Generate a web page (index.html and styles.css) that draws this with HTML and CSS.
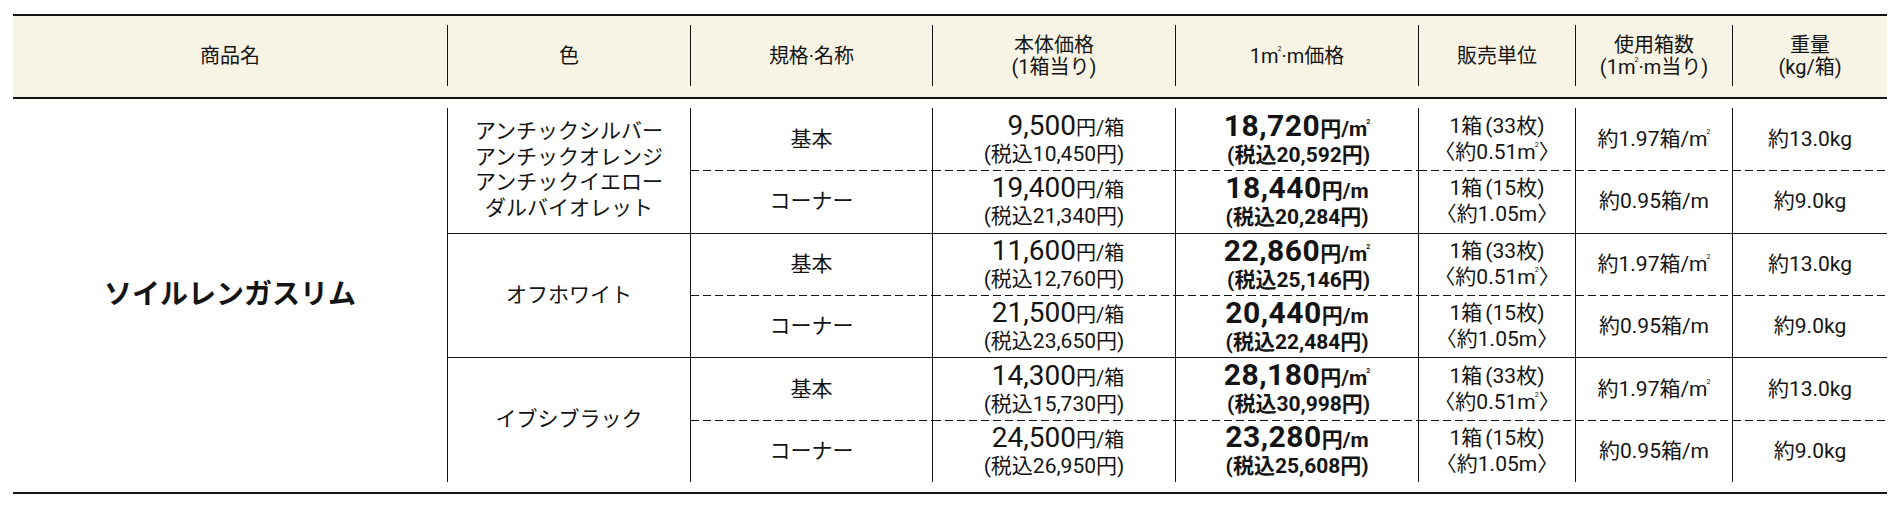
FILE: index.html
```html
<!DOCTYPE html>
<html lang="ja">
<head>
<meta charset="utf-8">
<title>ソイルレンガスリム 価格表</title>
<link rel="stylesheet" href="styles.css">
</head>
<body>
<div class="tbl">
  <div class="head">
    <div class="hc"><span>商品名</span></div>
    <div class="hc sep"><span>色</span></div>
    <div class="hc sep"><span>規格·名称</span></div>
    <div class="hc sep"><span>本体価格<br>(1箱当り)</span></div>
    <div class="hc sep"><span>1m<span class="sq">2</span>·m価格</span></div>
    <div class="hc sep"><span>販売単位</span></div>
    <div class="hc sep"><span>使用箱数<br>(1m<span class="sq">2</span>·m当り)</span></div>
    <div class="hc sep"><span>重量<br>(kg/箱)</span></div>
  </div>
  <div class="body">
    <div class="c prod"><span>ソイルレンガスリム</span></div>

    <div class="c sep color g1"><span>アンチックシルバー<br>アンチックオレンジ<br>アンチックイエロー<br>ダルバイオレット</span></div>
    <div class="c sep"><span>基本</span></div>
    <div class="c sep"><span class="pr"><span class="num">9,500</span><span class="u">円/箱</span><br><span class="tax">(税込10,450円)</span></span></div>
    <div class="c sep"><span class="pr b"><span class="num">18,720</span><span class="u">円/m<span class="sq">2</span></span><br><span class="tax">(税込20,592円)</span></span></div>
    <div class="c sep"><span class="two">1箱<span class="pl">(33枚)</span><br>〈約0.51m<span class="sq">2</span>〉</span></div>
    <div class="c sep"><span>約1.97箱/m<span class="sq">2</span></span></div>
    <div class="c sep"><span>約13.0kg</span></div>

    <div class="c sep dash"><span>コーナー</span></div>
    <div class="c sep dash"><span class="pr"><span class="num">19,400</span><span class="u">円/箱</span><br><span class="tax">(税込21,340円)</span></span></div>
    <div class="c sep dash"><span class="pr b"><span class="num">18,440</span><span class="u">円/m</span><br><span class="tax">(税込20,284円)</span></span></div>
    <div class="c sep dash"><span class="two">1箱<span class="pl">(15枚)</span><br>〈約1.05m〉</span></div>
    <div class="c sep dash"><span>約0.95箱/m</span></div>
    <div class="c sep dash"><span>約9.0kg</span></div>

    <div class="c sep color g2 top"><span>オフホワイト</span></div>
    <div class="c sep top"><span>基本</span></div>
    <div class="c sep top"><span class="pr"><span class="num">11,600</span><span class="u">円/箱</span><br><span class="tax">(税込12,760円)</span></span></div>
    <div class="c sep top"><span class="pr b"><span class="num">22,860</span><span class="u">円/m<span class="sq">2</span></span><br><span class="tax">(税込25,146円)</span></span></div>
    <div class="c sep top"><span class="two">1箱<span class="pl">(33枚)</span><br>〈約0.51m<span class="sq">2</span>〉</span></div>
    <div class="c sep top"><span>約1.97箱/m<span class="sq">2</span></span></div>
    <div class="c sep top"><span>約13.0kg</span></div>

    <div class="c sep dash"><span>コーナー</span></div>
    <div class="c sep dash"><span class="pr"><span class="num">21,500</span><span class="u">円/箱</span><br><span class="tax">(税込23,650円)</span></span></div>
    <div class="c sep dash"><span class="pr b"><span class="num">20,440</span><span class="u">円/m</span><br><span class="tax">(税込22,484円)</span></span></div>
    <div class="c sep dash"><span class="two">1箱<span class="pl">(15枚)</span><br>〈約1.05m〉</span></div>
    <div class="c sep dash"><span>約0.95箱/m</span></div>
    <div class="c sep dash"><span>約9.0kg</span></div>

    <div class="c sep color g3 top"><span>イブシブラック</span></div>
    <div class="c sep top"><span>基本</span></div>
    <div class="c sep top"><span class="pr"><span class="num">14,300</span><span class="u">円/箱</span><br><span class="tax">(税込15,730円)</span></span></div>
    <div class="c sep top"><span class="pr b"><span class="num">28,180</span><span class="u">円/m<span class="sq">2</span></span><br><span class="tax">(税込30,998円)</span></span></div>
    <div class="c sep top"><span class="two">1箱<span class="pl">(33枚)</span><br>〈約0.51m<span class="sq">2</span>〉</span></div>
    <div class="c sep top"><span>約1.97箱/m<span class="sq">2</span></span></div>
    <div class="c sep top"><span>約13.0kg</span></div>

    <div class="c sep dash"><span>コーナー</span></div>
    <div class="c sep dash"><span class="pr"><span class="num">24,500</span><span class="u">円/箱</span><br><span class="tax">(税込26,950円)</span></span></div>
    <div class="c sep dash"><span class="pr b"><span class="num">23,280</span><span class="u">円/m</span><br><span class="tax">(税込25,608円)</span></span></div>
    <div class="c sep dash"><span class="two">1箱<span class="pl">(15枚)</span><br>〈約1.05m〉</span></div>
    <div class="c sep dash"><span>約0.95箱/m</span></div>
    <div class="c sep dash"><span>約9.0kg</span></div>
  </div>
</div>
</body>
</html>
```

FILE: styles.css
```css
html, body {
  margin: 0;
  padding: 0;
  background: #fff;
}
body {
  font-family: "Roboto", "Noto Sans CJK JP", sans-serif;
  color: #141414;
  font-size: 21px;
}
.tbl {
  margin: 14px 0 0 13px;
  width: 1874px;
  border-top: 2px solid #141414;
  border-bottom: 2px solid #141414;
}
.head,
.body {
  display: grid;
  grid-template-columns: 434px 243px 242px 243px 243px 157px 157px 155px;
}
.head {
  background: #f7f4e6;
  padding: 9px 0 11px;
  border-bottom: 2px solid #141414;
  font-size: 20px;
}
.hc {
  height: 61px;
  display: flex;
  align-items: center;
  justify-content: center;
  text-align: center;
  line-height: 22px;
}
.sep {
  border-left: 1px solid #141414;
}
.body {
  grid-template-rows: repeat(6, 62.33px);
  padding: 9px 0 10px;
}
.c {
  display: flex;
  align-items: center;
  justify-content: center;
  text-align: center;
  line-height: 24px;
}
.prod {
  grid-column: 1;
  grid-row: 1 / span 6;
  font-size: 28px;
  font-weight: 700;
}
.color {
  grid-column: 2;
  line-height: 25.5px;
}
.g1 { grid-row: 1 / span 2; }
.g2 { grid-row: 3 / span 2; }
.g3 { grid-row: 5 / span 2; }
.top {
  border-top: 1px solid #141414;
}
.dash {
  background-image: repeating-linear-gradient(90deg, #141414 0 8px, transparent 8px 12px);
  background-size: 100% 1px;
  background-repeat: no-repeat;
  background-position: 0 0;
}
.pr {
  display: inline-block;
  text-align: right;
  line-height: 26px;
  margin-top: 2px;
}
.num {
  font-size: 28px;
}
.b .num {
  font-size: 30px;
  letter-spacing: 0.5px;
}
.u {
  font-size: 20px;
}
.b .u {
  font-size: 21px;
}
.tax {
  font-size: 21px;
}
.b {
  font-weight: 700;
}
.two {
  line-height: 26px;
}
.pl {
  margin-left: 3px;
}
.sq {
  font-size: 7px;
  vertical-align: 12px;
  line-height: 0;
  margin-left: -1px;
}
```
